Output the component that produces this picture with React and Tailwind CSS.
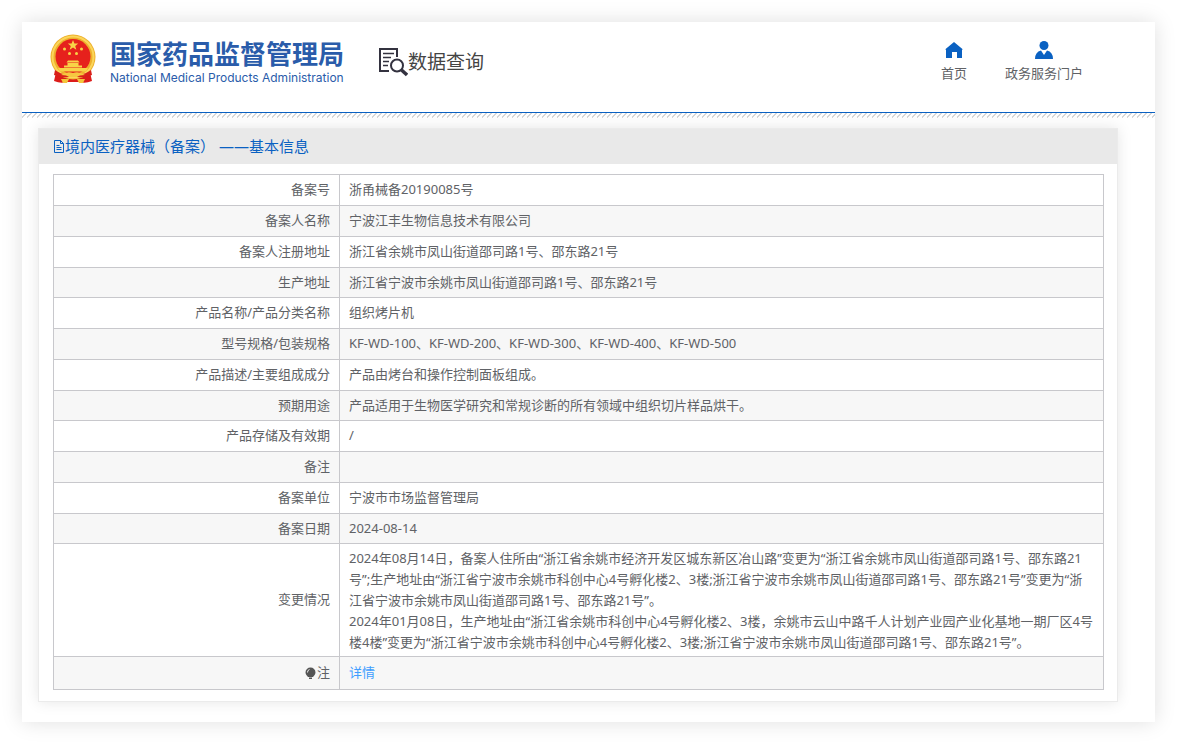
import { clsx } from "clsx";

const ROWS = [
  { label: "备案号", value: "浙甬械备20190085号" },
  { label: "备案人名称", value: "宁波江丰生物信息技术有限公司" },
  { label: "备案人注册地址", value: "浙江省余姚市凤山街道邵司路1号、邵东路21号" },
  { label: "生产地址", value: "浙江省宁波市余姚市凤山街道邵司路1号、邵东路21号" },
  { label: "产品名称/产品分类名称", value: "组织烤片机" },
  { label: "型号规格/包装规格", value: "KF-WD-100、KF-WD-200、KF-WD-300、KF-WD-400、KF-WD-500" },
  { label: "产品描述/主要组成成分", value: "产品由烤台和操作控制面板组成。" },
  { label: "预期用途", value: "产品适用于生物医学研究和常规诊断的所有领域中组织切片样品烘干。" },
  { label: "产品存储及有效期", value: "/" },
  { label: "备注", value: "" },
  { label: "备案单位", value: "宁波市市场监督管理局" },
  { label: "备案日期", value: "2024-08-14" },
];

const CHANGES = [
  "2024年08月14日，备案人住所由“浙江省余姚市经济开发区城东新区冶山路”变更为“浙江省余姚市凤山街道邵司路1号、邵东路21",
  "号”;生产地址由“浙江省宁波市余姚市科创中心4号孵化楼2、3楼;浙江省宁波市余姚市凤山街道邵司路1号、邵东路21号”变更为“浙",
  "江省宁波市余姚市凤山街道邵司路1号、邵东路21号”。",
  "2024年01月08日，生产地址由“浙江省余姚市科创中心4号孵化楼2、3楼，余姚市云山中路千人计划产业园产业化基地一期厂区4号楼4楼”变更为“浙江省宁波市余姚市科创中心4号孵化楼2、3楼;浙江省宁波市余姚市凤山街道邵司路1号、邵东路21号”。",
];

const CELL = "border border-[#c8c8cc] px-[9px]";

function Emblem() {
  return (
    <svg viewBox="0 0 48 50" className="h-[50px] w-12" aria-hidden="true">
      <path d="M8 34L5 47Q12 50 17 48H31Q36 50 43 47L40 34Z" fill="#dc1c1a" />
      <circle cx="24" cy="23" r="22.5" fill="#eeb02c" />
      <circle cx="24" cy="23" r="20.500" fill="none" stroke="#fbd65a" strokeWidth="2" />
      <circle cx="24" cy="22.500" r="17.500" fill="#e6211c" />
      <g fill="#f8d347">
        <path d="M24 6l1.400 3.600h3.800l-3 2.400 1.100 3.700L24 13.500l-3.300 2.200L21.800 12l-3-2.400h3.800z" />
        <circle cx="15.500" cy="15" r="1.500" />
        <circle cx="32.500" cy="15" r="1.500" />
        <circle cx="20.500" cy="19.500" r="1.500" />
        <circle cx="27.500" cy="19.500" r="1.500" />
        <path d="M19 26.500h10l1.500 2h-13zM18.500 29h11v2.500H33v2H15v-2h3.500zM9 34h30l-2 3.500H11z" />
      </g>
      <path d="M6 36Q15 43 24 38.500Q33 43 42 36L43 41Q32 45 24 42Q16 45 5 41Z" fill="#d8201a" />
      <path d="M12 41Q18 37 24 39Q30 37 36 41Q30 41 28 43H20Q18 41 12 41Z" fill="#f6c840" />
      <path d="M12 45h8l-2 4h-4zM28 45h8l-2 4h-4z" fill="#f4c63c" />
    </svg>
  );
}

function SearchDocIcon() {
  return (
    <svg viewBox="0 0 29 30" className="h-[30px] w-[29px]" fill="none" stroke="#33323f" aria-hidden="true">
      <path d="M10 24H1V2h17v8" strokeWidth="2" />
      <path d="M4 6.500h11M4 10.500h8M4 14.500h6M4 18.500h5" strokeWidth="1.400" />
      <circle cx="18" cy="18.500" r="6" strokeWidth="2" />
      <path d="M22.500 23l5.500 5" strokeWidth="3.400" />
    </svg>
  );
}

function HomeIcon() {
  return (
    <svg viewBox="0 0 18 18" className="h-[18px] w-[18px]" fill="#0a61c2" aria-hidden="true">
      <path d="M9 1L18 8.500H17V17H12V11H7V17H1V8.500H0Z" />
    </svg>
  );
}

function UserIcon() {
  return (
    <svg viewBox="0 0 18 18" className="h-[18px] w-[18px]" fill="#0a61c2" aria-hidden="true">
      <circle cx="9" cy="4.500" r="4.500" />
      <path d="M0 18Q0 11 6 9.500L9 14L12 9.500Q18 11 18 18Z" />
    </svg>
  );
}

function DocIcon() {
  return (
    <svg viewBox="0 0 12 13" className="h-[13px] w-3" fill="none" stroke="#0a61c2" aria-hidden="true">
      <path d="M1.500 .5h6l3 3v9h-9zM7.500 .5v3h3M3.500 5.500h3M3.500 7.500h5M3.500 9.500h5" />
    </svg>
  );
}

function BulbIcon() {
  return (
    <svg viewBox="0 0 11 13" className="h-[13px] w-[11px]" aria-hidden="true">
      <path d="M5.500 .5a5 5 0 0 1 5 5c0 2-1.500 3-2.500 4.500h-5C2 8.500 .5 7.500 .5 5.500a5 5 0 0 1 5-5zM4 10.500h3v1.500H4z" fill="#555" />
      <path d="M2.500 5.500a3 3 0 0 1 2-3" stroke="#eee" fill="none" />
    </svg>
  );
}

export default function App() {
  return (
    <div
      lang="zh-CN"
      className="px-[22px] py-[22px] font-['Noto_Sans','Noto_Sans_CJK_SC',sans-serif] text-[13px] text-[#606266]"
    >
      <div className="bg-white pb-5 shadow-[0_0_20px_rgba(0,0,0,0.13)]">
        <header className="flex h-[91px] items-start justify-between border-b border-[#0a61c2] pl-[27px] pr-[72px]">
          <div className="flex items-start">
            <div className="pt-3">
              <Emblem />
            </div>
            <div className="ml-[13px] pt-4 text-[#2a5caa]">
              <h1 className="text-[26px] leading-[32px] font-bold">国家药品监督管理局</h1>
              <p className="font-['Inter',sans-serif] text-xs leading-4">
                National Medical Products Administration
              </p>
            </div>
            <div className="ml-[35px] flex items-center pt-[25px] text-[#444]">
              <SearchDocIcon />
              <span className="text-[19px] leading-7">数据查询</span>
            </div>
          </div>
          <nav className="flex gap-[38px] pt-[19px]">
            <a href="#home" className="flex flex-col items-center gap-1">
              <HomeIcon />
              <span className="leading-5">首页</span>
            </a>
            <a href="#portal" className="flex flex-col items-center gap-1">
              <UserIcon />
              <span className="leading-5">政务服务门户</span>
            </a>
          </nav>
        </header>
        <div className="h-[5px] bg-[linear-gradient(135deg,#fff_40%,#d8d8d8_40%,#d8d8d8_60%,#fff_60%)] bg-[size:5px_5px]" />

        <section className="mt-[10px] mr-[37px] ml-4 border border-[#ebebeb] bg-white shadow-[0_0_14px_rgba(0,0,0,0.1)]">
          <h2 className="flex h-[35px] items-center bg-[#e9e9e9] pl-[14px] text-[15px] text-[#0a61c2]">
            <DocIcon />
            <span>境内医疗器械（备案） ——基本信息</span>
          </h2>
          <div className="pt-[10px] pr-[13px] pb-[11px] pl-[14px]">
            <table className="w-full table-fixed border-collapse">
              <colgroup>
                <col className="w-[286px]" />
                <col />
              </colgroup>
              <tbody>
                {ROWS.map((row, index) => (
                  <tr
                    key={row.label}
                    className={clsx(index % 4 === 3 ? "h-[30px]" : "h-[31px]", index % 2 === 1 && "bg-[#f7f7f7]")}
                  >
                    <th scope="row" className={clsx(CELL, "text-right font-normal")}>
                      {row.label}
                    </th>
                    <td className={CELL}>{row.value}</td>
                  </tr>
                ))}
                <tr className="h-[113px]">
                  <th scope="row" className={clsx(CELL, "text-right font-normal")}>
                    变更情况
                  </th>
                  <td className={clsx(CELL, "leading-[21px]")}>
                    {CHANGES.map((line) => (
                      <p key={line}>{line}</p>
                    ))}
                  </td>
                </tr>
                <tr className="h-[33px] bg-[#f7f7f7]">
                  <th scope="row" className={clsx(CELL, "font-normal")}>
                    <div className="flex items-center justify-end gap-px">
                      <BulbIcon />
                      注
                    </div>
                  </th>
                  <td className={CELL}>
                    <a href="#detail" className="text-[#409eff]">
                      详情
                    </a>
                  </td>
                </tr>
              </tbody>
            </table>
          </div>
        </section>
      </div>
    </div>
  );
}
